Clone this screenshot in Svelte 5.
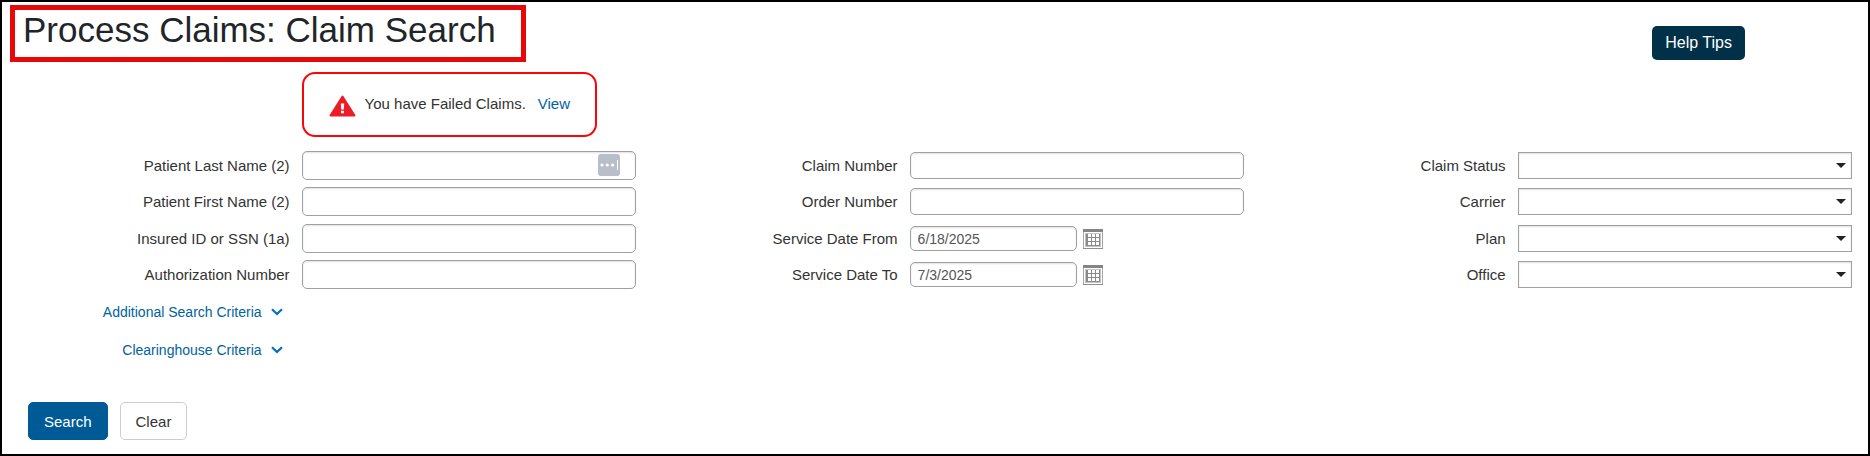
<script lang="ts">
interface Field {
	id: string
	label: string
	kind: "text" | "date" | "select"
	value: string
	autofill?: boolean
}

let columns: Field[][] = $state([
	[
		{ id: "lastName", label: "Patient Last Name (2)", kind: "text", value: "", autofill: true },
		{ id: "firstName", label: "Patient First Name (2)", kind: "text", value: "" },
		{ id: "insuredId", label: "Insured ID or SSN (1a)", kind: "text", value: "" },
		{ id: "authNumber", label: "Authorization Number", kind: "text", value: "" },
	],
	[
		{ id: "claimNumber", label: "Claim Number", kind: "text", value: "" },
		{ id: "orderNumber", label: "Order Number", kind: "text", value: "" },
		{ id: "dateFrom", label: "Service Date From", kind: "date", value: "6/18/2025" },
		{ id: "dateTo", label: "Service Date To", kind: "date", value: "7/3/2025" },
	],
	[
		{ id: "status", label: "Claim Status", kind: "select", value: "" },
		{ id: "carrier", label: "Carrier", kind: "select", value: "" },
		{ id: "plan", label: "Plan", kind: "select", value: "" },
		{ id: "office", label: "Office", kind: "select", value: "" },
	],
])

const criteria = ["Additional Search Criteria", "Clearinghouse Criteria"]
let open = $state([false, false])

function clear() {
	for (const column of columns) {
		for (const field of column) {
			field.value = ""
		}
	}
}
</script>

<main>
	<header>
		<h1>Process Claims: Claim Search</h1>
		<button type="button" class="help">Help Tips</button>
	</header>

	<form onsubmit={(e) => e.preventDefault()}>
		<div class="alertrow">
			<div class="alert" role="alert">
				<svg width="27" height="22" viewBox="0 0 27 22" aria-hidden="true">
					<path d="M13.5 1.5 L25.5 20.5 H1.5 Z" fill="#ed1c24" stroke="#ed1c24" stroke-width="2" stroke-linejoin="round" />
					<path d="M11.8 8.5 H15.2 L14.8 14.5 H12.2 Z M12 15.8 H15 V18.3 H12 Z" fill="#fff" />
				</svg>
				<span>You have Failed Claims.</span>
				<a href="#failed">View</a>
			</div>
		</div>

		<div class="columns">
			{#each columns as column, c}
				<div class="column">
					{#each column as field (field.id)}
						<div class="row">
							<label for={field.id}>{field.label}</label>
							<div class="control">
								{#if field.kind === "select"}
									<select id={field.id} bind:value={field.value}>
										<option value=""></option>
									</select>
									<svg class="arrow" width="10" height="5" viewBox="0 0 10 5" aria-hidden="true">
										<path d="M0 0 H10 L5 5 Z" fill="#222" />
									</svg>
								{:else if field.kind === "date"}
									<input id={field.id} class="date" type="text" bind:value={field.value} />
									<button type="button" class="calendar" aria-label="Pick {field.label}">
										<svg width="20" height="20" viewBox="0 0 20 20">
											<rect x="0.5" y="0.5" width="19" height="19" fill="#fff" stroke="#a8a8a8" />
											<path d="M0 1.5 H20" stroke="#858585" stroke-width="3" />
											<path d="M0 19.5 H20" stroke="#8f8f8f" />
											<rect x="2" y="4" width="16" height="14" fill="#c4c4c4" />
											<rect x="3" y="5" width="14" height="12" fill="#8a8a8a" />
											{#each [4, 8, 12] as y}
												{#each [5, 9, 13] as x}
													<rect {x} y={y + 1} width="3" height="3" fill="#fff" />
												{/each}
											{/each}
										</svg>
									</button>
								{:else}
									<input id={field.id} class={c === 0 ? "tall" : ""} type="text" bind:value={field.value} />
									{#if field.autofill}
										<svg class="autofill" width="22" height="22" viewBox="0 0 22 22" aria-hidden="true">
											<rect width="22" height="22" rx="3" fill="#b8bfca" />
											<circle cx="4" cy="11" r="1.6" fill="#fff" />
											<circle cx="9.3" cy="11" r="1.6" fill="#fff" />
											<circle cx="14.6" cy="11" r="1.6" fill="#fff" />
											<path d="M19.5 6 V16" stroke="#fff" />
										</svg>
									{/if}
								{/if}
							</div>
						</div>
					{/each}
					{#if c === 0}
						<div class="criteria">
							{#each criteria as name, i}
								<button type="button" aria-expanded={open[i]} onclick={() => (open[i] = !open[i])}>
									{name}
									<svg width="12" height="8" viewBox="0 0 12 8" aria-hidden="true">
										<path d="M1 1.2 L6 6 L11 1.2" fill="none" stroke="#0071b8" stroke-width="2.2" />
									</svg>
								</button>
							{/each}
						</div>
					{/if}
				</div>
			{/each}
		</div>

		<div class="actions">
			<button type="submit" class="search">Search</button>
			<button type="button" class="clear" onclick={clear}>Clear</button>
		</div>
	</form>
</main>

<style>
:global(body) {
  background: #fff;
}

main {
  box-sizing: border-box;
  min-height: 100vh;
  border: 2px solid #000;
  padding: 3px 8px 12px;
  font-family: "Liberation Sans", Arial, sans-serif;
  font-size: 15px;
  line-height: 20px;
  color: #333;
}

button,
input,
select {
  box-sizing: border-box;
  font-family: inherit;
  margin: 0;
}

button {
  cursor: pointer;
}

header {
  display: flex;
  justify-content: space-between;
  align-items: flex-start;
}

h1 {
  box-sizing: border-box;
  margin: 0;
  border: 5px solid #e90808;
  padding: 0 25px 7px 8px;
  font-size: 35px;
  font-weight: 400;
  line-height: 40px;
  color: #212529;
}

.help {
  height: 34px;
  margin: 21px 115px 0 0;
  border: none;
  border-radius: 5px;
  padding: 0 13px;
  background: #003149;
  color: #fff;
  font-size: 16px;
}

form {
  padding: 10px 8px 0 18px;
}

.alertrow {
  display: flex;
  padding-left: 15%;
}

.alert {
  display: flex;
  align-items: center;
  box-sizing: border-box;
  height: 65px;
  border: 2px solid #fb0505;
  border-radius: 13px;
  padding: 0 25px;

  svg {
    margin: 3px 9px 0 0;
  }

  span,
  a {
    margin-bottom: 2px;
  }

  a {
    margin-left: 12px;
  }
}

a {
  color: #0062a0;
  text-decoration: none;
}

.columns {
  display: grid;
  grid-template-columns: repeat(3, 1fr);
  padding-top: 14px;
}

.row {
  display: flex;
  align-items: center;
  gap: 12px;
  height: 29px;
  margin-bottom: 7px;
}

.row:nth-child(2) {
  margin-bottom: 8px;
}

label {
  flex: 1;
  text-align: right;
}

.control {
  position: relative;
  display: flex;
  align-items: center;
  width: 55%;
}

input,
select {
  width: 100%;
  height: 27px;
  border: 1px solid #a0a0a0;
  padding: 0 7px;
  background: #fff;
  box-shadow: inset 0 1px 2px rgba(0, 0, 0, 0.12);
  font-size: 14px;
  color: #555;
}

input {
  border-radius: 5px;
}

input.tall {
  height: 29px;
}

input.date {
  width: 50%;
  height: 25px;
}

select {
  appearance: none;
  border-radius: 0;
}

.arrow {
  position: absolute;
  right: 6px;
  top: 11px;
  pointer-events: none;
}

.autofill {
  position: absolute;
  right: 16px;
  top: 3px;
}

.calendar {
  display: flex;
  margin-left: 6px;
  border: none;
  padding: 0;
  background: none;
}

.criteria {
  display: flex;
  flex-direction: column;
  align-items: flex-end;
  gap: 18px;
  width: 45%;
  box-sizing: border-box;
  padding: 6px 19px 0 0;

  button {
    display: flex;
    align-items: center;
    gap: 9px;
    border: none;
    padding: 0;
    background: none;
    font-size: 14px;
    line-height: 20px;
    color: #0062a0;
  }
}

.actions {
  display: flex;
  gap: 12px;
  padding-top: 42px;

  button {
    height: 38px;
    border: 1px solid #ccc;
    border-radius: 5px;
    padding: 0 15px;
    background: #fff;
    font-size: 15px;
    color: #333;
  }

  .search {
    border-color: #005a96;
    background: #005a96;
    color: #fff;
  }
}
</style>
